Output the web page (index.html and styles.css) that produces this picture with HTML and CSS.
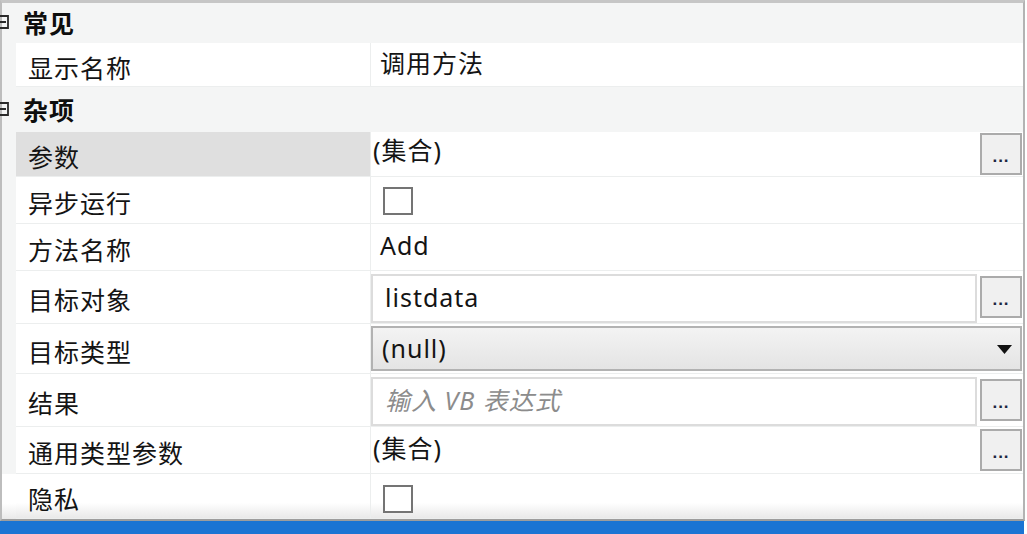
FILE: index.html
```html
<!DOCTYPE html>
<html lang="zh">
<head>
<meta charset="utf-8">
<title>属性</title>
<link rel="stylesheet" href="styles.css">
</head>
<body>
<div class="grid">
  <div class="row cat h40">
    <div class="gutter"><svg class="exp" width="10" height="14" viewBox="0 0 10 14"><path d="M0 1H8V13H0M0 7H6" fill="none" stroke="#2a2a2a" stroke-width="1.8"/></svg></div>
    <div class="cat-title">常见</div>
  </div>
  <div class="row h44">
    <div class="gutter"></div>
    <div class="label">显示名称</div>
    <div class="value"><span class="text">调用方法</span></div>
  </div>
  <div class="row cat h45">
    <div class="gutter"><svg class="exp" width="10" height="14" viewBox="0 0 10 14"><path d="M0 1H8V13H0M0 7H6" fill="none" stroke="#2a2a2a" stroke-width="1.8"/></svg></div>
    <div class="cat-title">杂项</div>
  </div>
  <div class="row h45">
    <div class="gutter"></div>
    <div class="label selected">参数</div>
    <div class="value"><span class="text coll up">(集合)</span><button class="more">...</button></div>
  </div>
  <div class="row h47">
    <div class="gutter"></div>
    <div class="label">异步运行</div>
    <div class="value"><span class="check"></span></div>
  </div>
  <div class="row h47">
    <div class="gutter"></div>
    <div class="label">方法名称</div>
    <div class="value"><span class="text">Add</span></div>
  </div>
  <div class="row h53">
    <div class="gutter"></div>
    <div class="label">目标对象</div>
    <div class="value"><div class="textbox">listdata</div><button class="more">...</button></div>
  </div>
  <div class="row h50">
    <div class="gutter"></div>
    <div class="label">目标类型</div>
    <div class="value"><div class="dropdown"><span>(null)</span><svg class="arrow" width="15" height="9" viewBox="0 0 15 9"><path d="M0 0H15L7.5 9Z" fill="#111"/></svg></div></div>
  </div>
  <div class="row h53">
    <div class="gutter"></div>
    <div class="label">结果</div>
    <div class="value"><div class="textbox placeholder">输入 VB 表达式</div><button class="more">...</button></div>
  </div>
  <div class="row h47">
    <div class="gutter"></div>
    <div class="label">通用类型参数</div>
    <div class="value"><span class="text coll">(集合)</span><button class="more">...</button></div>
  </div>
  <div class="row h45 last">
    <div class="gutter"></div>
    <div class="label">隐私</div>
    <div class="value"><span class="check low"></span></div>
  </div>
</div>
<div class="statusbar"></div>
</body>
</html>
```

FILE: styles.css
```css
html, body {
  margin: 0;
  padding: 0;
  background: #ffffff;
}

body {
  font-family: "Noto Sans", "Noto Sans CJK SC", sans-serif;
  font-size: 25px;
  letter-spacing: 1px;
  color: #141414;
  line-height: 1.2;
  width: 1027px;
  height: 534px;
  overflow: hidden;
}

.grid {
  width: 1021px;
  border-left: 2px solid #bdbdbd;
  border-right: 2px solid #b3b3b3;
  border-top: 3px solid #c6c6c6;
  border-bottom: 2px solid #9d9d9d;
}

.row {
  display: flex;
  box-sizing: border-box;
}

.h40 { height: 40px; }
.h44 { height: 44px; }
.h45 { height: 45px; }
.h47 { height: 47px; }
.h50 { height: 50px; }
.h53 { height: 53px; }

.gutter {
  width: 14px;
  flex: none;
  background: #f4f5f5;
  display: flex;
  align-items: center;
}

.exp {
  display: block;
  margin-left: -2px;
  margin-top: -2px;
}

.cat {
  background: #f4f5f5;
  align-items: center;
}

.cat-title {
  font-weight: 700;
  padding-left: 7px;
  color: #0e0e0e;
}

.label {
  width: 355px;
  flex: none;
  box-sizing: border-box;
  display: flex;
  align-items: center;
  padding-left: 12px;
  padding-top: 6px;
  background: #ffffff;
  border-bottom: 1px solid #eceeee;
  border-right: 1px solid #eceeee;
}

.label.selected {
  background: #dfdfdf;
}

.value {
  flex: 1;
  display: flex;
  align-items: center;
  padding-right: 1px;
  background: #ffffff;
  border-bottom: 1px solid #eceeee;
  min-width: 0;
}

.text {
  padding-left: 9px;
  padding-bottom: 4px;
}

.text.coll {
  padding-left: 2px;
  flex: 1;
}

.text.up {
  padding-bottom: 8px;
}

.more {
  width: 42px;
  height: 42px;
  flex: none;
  box-sizing: border-box;
  margin: 0 0 0 3px;
  padding: 0 0 8px 0;
  border: 2px solid #ababab;
  background: #f0f0f0;
  display: flex;
  justify-content: center;
  align-items: flex-end;
  font-family: "Liberation Sans", sans-serif;
  font-weight: 700;
  font-size: 17px;
  line-height: 1;
  letter-spacing: 1px;
  color: #1c2540;
}

.textbox {
  flex: 1;
  height: 49px;
  box-sizing: border-box;
  margin-top: 2px;
  border: 2px solid #dcdcdc;
  background: #ffffff;
  padding-left: 12px;
  display: flex;
  align-items: center;
  padding-bottom: 2px;
}

.textbox.placeholder {
  font-style: italic;
  color: #8c8c8c;
}

.dropdown {
  flex: 1;
  height: 45px;
  box-sizing: border-box;
  border: 2px solid #b2b2b2;
  background: linear-gradient(#f3f3f3, #e4e4e4);
  display: flex;
  align-items: center;
  justify-content: space-between;
  padding: 0 8px 2px 9px;
}

.arrow {
  display: block;
  margin-top: 4px;
}

.check {
  width: 30px;
  height: 28px;
  box-sizing: border-box;
  margin-left: 12px;
  margin-top: 2px;
  border: 2px solid #747474;
  background: #ffffff;
}

.check.low {
  margin-top: 6px;
}

.last .label,
.last .value,
.last .gutter {
  background: linear-gradient(#ffffff 65%, #e9e9e9);
}

.statusbar {
  width: 1024px;
  height: 13px;
  background: #1b74d3;
}
```
